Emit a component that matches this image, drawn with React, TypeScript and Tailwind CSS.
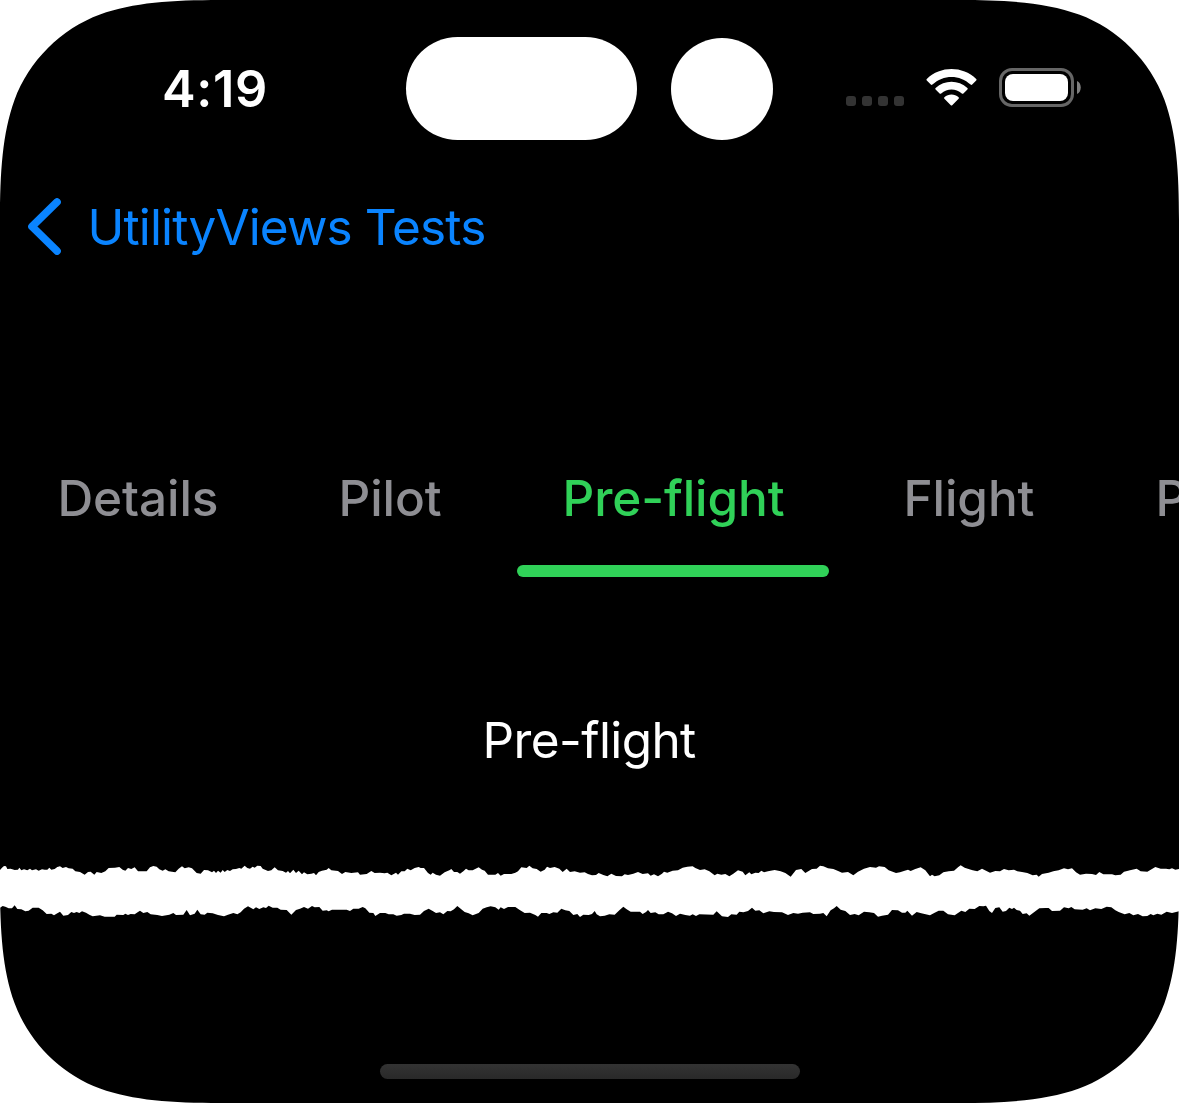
type Pair = [number, number];

// Height of the paper edge, sampled along the tear, in thirds of a pixel.
const upperPoints: Pair[] = [
  [0, 45], [6, 38], [12, 33], [18, 34], [22, 42], [32, 41], [44, 45], [54, 44], [58, 38], [64, 46], [72, 43], [82, 46], [90, 41], [96, 46], [108, 43], [116, 47], [126, 43], [134, 44], [142, 44], [148, 38], [154, 44], [164, 42], [172, 36], [180, 34], [188, 39], [198, 36], [206, 40], [218, 41], [226, 49], [240, 51], [254, 59], [264, 51], [272, 50], [283, 59], [290, 51], [304, 54], [316, 49], [326, 39], [345, 38], [358, 36], [368, 44], [376, 47], [384, 39], [394, 42], [404, 37], [414, 49], [440, 49], [450, 37], [460, 33], [470, 35], [478, 43], [488, 47], [496, 43], [506, 49], [526, 52], [536, 41], [546, 34], [554, 40], [566, 37], [576, 40], [590, 54], [602, 56], [612, 45], [624, 46], [636, 52], [642, 47], [648, 54], [654, 47], [662, 53], [668, 45], [674, 51], [682, 45], [690, 48], [698, 43], [708, 42], [718, 39], [724, 41], [734, 32], [742, 39], [750, 41], [758, 35], [764, 38], [772, 32], [782, 33], [788, 41], [804, 48], [814, 46], [824, 37], [834, 46], [848, 48], [858, 53], [864, 48], [870, 55], [880, 44], [888, 54], [896, 47],
  [906, 58], [912, 52], [922, 58], [934, 56], [942, 54], [948, 61], [956, 51], [966, 47], [980, 44], [986, 39], [994, 46], [1014, 48], [1026, 57], [1036, 51], [1054, 54], [1074, 52], [1080, 59], [1100, 57], [1114, 48], [1124, 54], [1140, 53], [1154, 55], [1162, 53], [1174, 61], [1188, 53], [1194, 59], [1204, 49], [1214, 49], [1222, 41], [1232, 46], [1244, 39], [1256, 36], [1262, 39], [1272, 39], [1284, 54], [1292, 59], [1298, 53], [1308, 59], [1320, 62], [1334, 52], [1348, 46], [1354, 42], [1362, 51], [1372, 51], [1380, 56], [1390, 49], [1398, 41], [1406, 46], [1418, 46], [1436, 37], [1446, 44], [1454, 47], [1464, 59], [1486, 59], [1494, 54], [1502, 62], [1512, 57], [1534, 57], [1546, 53], [1554, 49], [1564, 37], [1580, 39], [1588, 32], [1598, 40], [1610, 42], [1622, 50], [1634, 44], [1641, 35], [1650, 39], [1664, 36], [1678, 41], [1688, 51], [1700, 41], [1710, 51], [1724, 49], [1740, 53], [1754, 52], [1764, 57], [1776, 61], [1788, 60], [1796, 54],
  [1810, 60], [1822, 64], [1834, 56], [1848, 63], [1866, 64], [1874, 58], [1884, 60], [1900, 56], [1914, 51], [1928, 57], [1944, 55], [1952, 62], [1962, 58], [1974, 64], [1986, 56], [1992, 50], [2002, 53], [2018, 47], [2034, 46], [2048, 38], [2062, 35], [2078, 34], [2086, 39], [2100, 45], [2114, 43], [2128, 49], [2144, 61], [2152, 56], [2164, 59], [2176, 57], [2188, 64], [2200, 56], [2214, 46], [2228, 50], [2236, 61], [2248, 52], [2254, 58], [2266, 53], [2276, 54], [2284, 47], [2292, 52], [2304, 49], [2324, 45], [2342, 49], [2356, 54], [2372, 65], [2388, 45], [2404, 42], [2416, 54], [2436, 42], [2450, 41], [2460, 32], [2470, 34], [2484, 40], [2500, 42], [2516, 49], [2526, 53], [2544, 51], [2560, 61], [2574, 50], [2592, 41], [2610, 36], [2628, 38], [2637, 34],
  [2654, 36], [2666, 46], [2688, 54], [2700, 52], [2714, 47], [2724, 44], [2732, 48], [2746, 42], [2762, 37], [2776, 46], [2790, 64], [2796, 59], [2804, 64], [2818, 61], [2830, 52], [2846, 49], [2862, 47], [2874, 37], [2882, 31], [2894, 38], [2908, 43], [2918, 46], [2932, 49], [2946, 41], [2958, 47], [2970, 53], [2986, 48], [3000, 49], [3012, 42], [3026, 46], [3042, 44], [3052, 49], [3066, 51], [3082, 54], [3098, 61], [3110, 59], [3116, 65], [3126, 57], [3146, 53], [3160, 49], [3176, 46], [3192, 40], [3204, 43], [3216, 40], [3228, 52], [3240, 59], [3258, 56], [3276, 57], [3288, 60], [3298, 51], [3310, 58], [3336, 58], [3346, 61], [3362, 59], [3372, 50], [3390, 46], [3410, 41], [3422, 49], [3442, 50], [3456, 42], [3466, 36], [3482, 41], [3498, 41], [3508, 43], [3516, 40], [3526, 44], [3537, 42],
];

const lowerPoints: Pair[] = [
  [0, 158], [8, 153], [16, 155], [26, 160], [36, 160], [44, 151], [52, 162], [64, 163], [76, 169], [86, 167], [98, 158], [116, 158], [128, 166], [140, 177], [154, 176], [162, 181], [172, 175], [180, 170], [190, 182], [204, 180], [214, 171], [222, 174], [230, 171], [238, 174], [246, 169], [258, 173], [268, 179], [278, 184], [300, 181], [314, 185], [344, 185], [350, 179], [370, 180], [376, 176], [384, 180], [392, 177], [404, 178], [414, 171], [420, 167], [430, 174], [442, 171], [452, 178], [472, 180], [486, 183], [508, 179], [520, 174], [528, 180], [550, 179], [560, 165], [570, 181], [584, 176], [592, 164], [602, 178], [614, 179], [622, 173], [638, 175], [654, 180], [672, 184], [684, 179], [700, 174], [712, 178], [722, 172], [732, 161], [744, 154], [760, 163], [768, 157], [778, 162], [790, 157], [798, 159], [806, 152], [818, 158], [832, 158], [842, 164], [860, 165], [874, 179], [888, 165], [900, 161],
  [912, 156], [924, 161], [936, 153], [944, 157], [958, 156], [968, 167], [980, 166], [986, 169], [996, 164], [1040, 164], [1050, 168], [1060, 161], [1076, 161], [1088, 156], [1096, 160], [1108, 173], [1120, 174], [1126, 183], [1140, 174], [1156, 174], [1166, 178], [1180, 178], [1190, 182], [1204, 180], [1212, 176], [1230, 176], [1244, 180], [1260, 179], [1272, 168], [1286, 161], [1298, 168], [1308, 174], [1320, 172], [1330, 178], [1342, 168], [1352, 169], [1362, 163], [1372, 153], [1382, 161], [1394, 171], [1406, 175], [1418, 181], [1436, 174], [1448, 161], [1460, 157], [1472, 154], [1486, 157], [1496, 164], [1502, 157], [1512, 162], [1524, 156], [1546, 156], [1558, 164], [1574, 174], [1590, 173], [1606, 180], [1614, 185], [1624, 174], [1640, 174], [1648, 177], [1660, 172], [1672, 173], [1684, 161], [1696, 166], [1708, 168], [1720, 180], [1732, 177], [1740, 186], [1750, 179], [1766, 180], [1776, 177], [1784, 168], [1790, 178], [1800, 184],
  [1814, 182], [1828, 178], [1844, 179], [1858, 166], [1870, 155], [1880, 163], [1892, 170], [1920, 170], [1928, 177], [1938, 171], [1944, 165], [1952, 174], [1966, 172], [1976, 178], [1990, 178], [2004, 170], [2016, 175], [2028, 183], [2040, 176], [2056, 180], [2070, 182], [2078, 178], [2088, 183], [2098, 178], [2140, 179], [2150, 169], [2166, 184], [2184, 186], [2194, 178], [2210, 179], [2218, 170], [2230, 172], [2244, 168], [2256, 158], [2266, 167], [2278, 166], [2290, 175], [2308, 169], [2322, 171], [2346, 172], [2364, 180], [2380, 174], [2394, 176], [2408, 173], [2430, 172], [2440, 177], [2460, 176], [2470, 174], [2480, 184], [2492, 166], [2502, 160], [2510, 153], [2522, 164], [2536, 168], [2550, 180], [2564, 177], [2576, 181], [2592, 170], [2608, 172], [2622, 174], [2634, 185],
  [2646, 182], [2664, 179], [2676, 165], [2694, 166], [2706, 173], [2716, 173], [2722, 167], [2736, 182], [2750, 171], [2764, 175], [2790, 181], [2804, 173], [2816, 167], [2830, 167], [2844, 178], [2864, 181], [2884, 167], [2896, 171], [2908, 161], [2924, 162], [2938, 153], [2950, 154], [2958, 152], [2968, 168], [2976, 174], [2986, 159], [2998, 157], [3008, 170], [3018, 168], [3028, 158], [3036, 162], [3042, 158], [3050, 165], [3060, 167], [3068, 177], [3080, 175], [3088, 182], [3102, 172], [3118, 160], [3136, 159], [3146, 159], [3156, 168], [3180, 167], [3192, 157], [3206, 160], [3214, 156], [3224, 163], [3248, 164], [3260, 160], [3270, 166], [3286, 160], [3304, 162], [3320, 155], [3334, 157], [3346, 166], [3356, 171], [3374, 178], [3388, 174], [3400, 181], [3414, 177], [3428, 184], [3442, 183], [3452, 177], [3460, 181], [3472, 176], [3484, 179], [3500, 170], [3516, 174], [3537, 169],
];

const join = (points: Pair[]) => points.map((p) => p.join(" ")).join("L");
const paper = `M${join(upperPoints)}L${join([...lowerPoints].reverse())}Z`;

function Corner({ className }: { className: string }) {
  return (
    <svg className={`absolute size-[220px] ${className}`} viewBox="0 0 220 220" fill="white">
      <path d="M220 0C172 0 133 2.5 100 14.5C61.2 28.6 28.6 61.2 14.5 100C2.5 133 0 172 0 220V0Z" />
    </svg>
  );
}

function StatusBar() {
  return (
    <header className="flex h-[177px] items-center">
      <div className="w-[405.5px] pl-[162px] text-[50.5px] font-semibold tracking-[0.6px]">4:19</div>
      <div className="h-[102.6px] w-[231px] rounded-full bg-white" />
      <div className="ml-[34.5px] size-[102px] rounded-full bg-white" />
      <div className="ml-[73px] mt-[25px] flex gap-1.5">
        <i className="size-2.5 rounded-[3px] bg-[#333]" />
        <i className="size-2.5 rounded-[3px] bg-[#333]" />
        <i className="size-2.5 rounded-[3px] bg-[#333]" />
        <i className="size-2.5 rounded-[3px] bg-[#333]" />
      </div>
      <svg className="-mt-[3px] ml-[22px] h-[37px] w-[51px]" viewBox="0 0 51 37" fill="white">
        <path d="M.8 10C14.5-3.2 36.5-3.2 50.2 10Q51 10.8 50.2 11.5L46.2 15.6Q45.4 16.3 44.6 15.6C33.8 5.3 17.2 5.3 6.4 15.6Q5.6 16.3 4.8 15.6L.8 11.5Q0 10.8 .8 10Z" />
        <path d="M9.6 19C18.5 10.6 32.5 10.6 41.4 19Q42.2 19.8 41.4 20.5L37.4 24.5Q36.6 25.2 35.8 24.5C29.9 19.2 21.1 19.2 15.2 24.5Q14.4 25.2 13.6 24.5L9.6 20.5Q8.8 19.8 9.6 19Z" />
        <path d="M18.4 28.2C22.4 24.7 28.6 24.7 32.6 28.2Q33.4 29 32.6 29.8L26.2 36.2Q25.5 36.9 24.8 36.2L18.4 29.8Q17.6 29 18.4 28.2Z" />
      </svg>
      <div className="-mt-[2px] ml-[22px] flex h-[39px] w-[75px] rounded-[13px] border-[3px] border-[#666] p-[3px]">
        <div className="flex-1 rounded-[8px] bg-white" />
      </div>
      <svg className="-mt-[2px] ml-[3px] h-[13px] w-1" viewBox="0 0 4 13" fill="#808080">
        <path d="M0 0C5 2 5 11 0 13Z" />
      </svg>
    </header>
  );
}

export default function App() {
  return (
    <main className="relative h-[1103px] w-[1179px] overflow-hidden bg-black font-['Inter',sans-serif] text-white">
      <StatusBar />
      <nav className="flex h-[100px] items-center pl-7 text-[49.5px] text-[#0a84ff]">
        <svg className="-mt-[2px] h-[57px] w-[33px]" viewBox="0 0 33 57" fill="none" stroke="currentColor" strokeWidth="7.6" strokeLinecap="round" strokeLinejoin="round">
          <path d="M29 4L4 28.5L29 53" />
        </svg>
        <span className="ml-[26.5px] whitespace-nowrap tracking-[-0.87px]">UtilityViews Tests</span>
      </nav>
      <div className="mt-[171px] flex gap-[29px] whitespace-nowrap pl-3 text-[49.5px] font-medium leading-[100px] text-[#8e8e93]">
        <div className="w-[252px] shrink-0 pl-[45.5px] tracking-[-0.1px]">Details</div>
        <div className="w-[195px] shrink-0 pl-[45.5px] tracking-[-0.1px]">Pilot</div>
        <div className="flex w-[312px] shrink-0 flex-col text-[#30d158]">
          <span className="pl-[45.5px] tracking-[-0.1px]">Pre-flight</span>
          <div className="mt-[17px] h-3 rounded-full bg-[#30d158]" />
        </div>
        <div className="w-[223px] shrink-0 pl-[45.5px] tracking-[-0.1px]">Flight</div>
        <div className="shrink-0 pl-[45.5px] tracking-[-0.1px]">Post-flight</div>
      </div>
      <div className="mt-[113px] h-[100px] pl-[482.5px] text-[49.5px] leading-[100px] tracking-[-0.6px]">Pre-flight</div>
      <svg className="mt-[65px] h-[70px] w-[1179px]" viewBox="0 0 3537 210" fill="white">
        <path d={paper} />
      </svg>
      <div className="mx-auto mt-[139px] h-[15px] w-[420px] rounded-full bg-linear-to-b from-[#333] to-[#292929]" />
      <Corner className="left-0 top-0" />
      <Corner className="right-0 top-0 -scale-x-100" />
      <Corner className="bottom-0 left-0 -scale-y-100" />
      <Corner className="bottom-0 right-0 -scale-100" />
    </main>
  );
}
